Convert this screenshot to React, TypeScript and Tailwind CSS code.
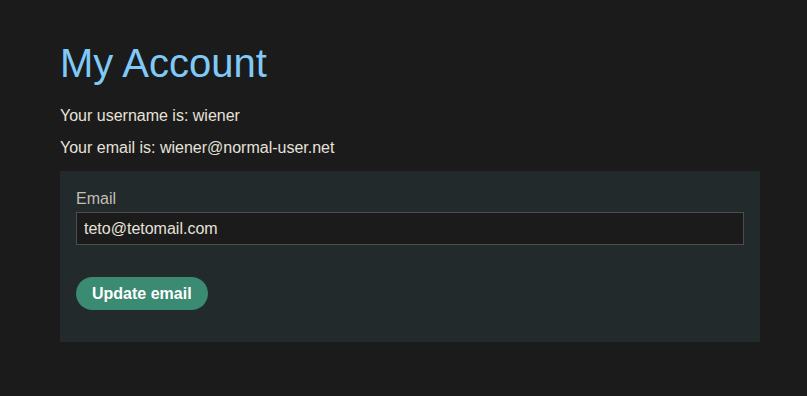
export default function App() {
  return (
    <div
      className="min-h-[396px] w-full bg-[#1b1b1b] px-[60px] pt-[39px]"
      style={{ fontFamily: '"Liberation Sans", Arial, sans-serif' }}
    >
      <h1 className="text-[40px] leading-[48px] text-[#7fcaf8]">My Account</h1>
      <p className="mt-[17px] text-[16px] leading-[24px] text-[#e6e2da]">Your username is: wiener</p>
      <p className="mt-[8px] text-[16px] leading-[24px] text-[#e6e2da]">Your email is: wiener@normal-user.net</p>
      <form
        className="mt-[11px] flex w-[700px] flex-col bg-[#222a2c] px-4 pb-8 pt-4"
        onSubmit={(e) => e.preventDefault()}
      >
        <label className="text-[16px] leading-[24px] text-[#c4beb4]">Email</label>
        <input
          className="mt-px h-[33px] w-full border border-[#4d4d4d] bg-[#1b1b1b] px-[7px] text-[16px] text-[#e6e2da] outline-none"
          defaultValue="teto@tetomail.com"
        />
        <div className="mt-8">
          <button
            type="submit"
            className="h-[33px] rounded-full bg-[#3b8a72] px-4 text-[16px] font-bold text-white"
          >
            Update email
          </button>
        </div>
      </form>
    </div>
  );
}
